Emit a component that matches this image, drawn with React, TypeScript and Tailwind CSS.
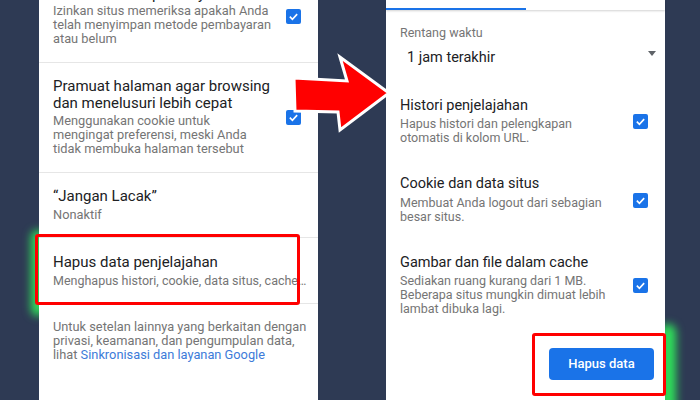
import React from 'react';

const Check: React.FC = () => (
  <div className="w-[15px] h-[15px] rounded-[2px] bg-[#1a73e8] flex items-center justify-center shrink-0">
    <svg width="11" height="11" viewBox="0 0 12 12">
      <path d="M2 6.2 L4.8 9 L10 3.4" fill="none" stroke="#fff" strokeWidth="1.8" />
    </svg>
  </div>
);

const App: React.FC = () => {
  return (
    <div
      className="relative w-[700px] h-[400px] overflow-hidden bg-[#2e3a54] flex pl-[39px] gap-[68px]"
      style={{ fontFamily: 'Roboto, "Noto Sans", sans-serif' }}
    >
      {/* green glows behind the phones */}
      <div className="absolute left-[31px] top-[230px] w-[14px] h-[86px] bg-[#2fe05a] blur-[4px] rounded-full" />
      <div className="absolute left-[660px] top-[324px] w-[16px] h-[96px] bg-[#2fe05a] blur-[4px] rounded-full" />

      {/* Left phone: privacy settings */}
      <div className="relative z-10 w-[279px] h-[400px] bg-white flex flex-col">
        <div className="-mt-[14px] pl-[14px] pr-[17px] pb-[16px] flex items-center border-b border-[#e6e6e6]">
          <div className="flex-1">
            <div className="text-[15px] leading-[17px] text-[#202124]">Akses metode pembayaran</div>
            <div className="mt-[1px] text-[12.8px] leading-[14px] text-[#757575]">
              Izinkan situs memeriksa apakah Anda<br />telah menyimpan metode pembayaran<br />atau belum
            </div>
          </div>
          <Check />
        </div>

        <div className="pt-[15px] pl-[14px] pr-[17px] pb-[16px] flex items-center border-b border-[#e6e6e6]">
          <div className="flex-1">
            <div className="text-[15px] leading-[17px] text-[#202124]">
              Pramuat halaman agar browsing<br />dan menelusuri lebih cepat
            </div>
            <div className="mt-[2px] text-[12.8px] leading-[14px] text-[#757575]">
              Menggunakan cookie untuk<br />mengingat preferensi, meski Anda<br />tidak membuka halaman tersebut
            </div>
          </div>
          <Check />
        </div>

        <div className="pt-[15px] pl-[14px] pb-[15px] border-b border-[#e6e6e6]">
          <div className="text-[15px] leading-[17px] text-[#202124]">“Jangan Lacak”</div>
          <div className="mt-[3px] text-[12.8px] leading-[14px] text-[#757575]">Nonaktif</div>
        </div>

        <div className="relative pt-[16px] pl-[14px] pb-[15px] border-b border-[#e6e6e6]">
          <div className="text-[15px] leading-[17px] text-[#202124]">Hapus data penjelajahan</div>
          <div className="mt-[3px] text-[12.5px] leading-[14px] text-[#757575] whitespace-nowrap">
            Menghapus histori, cookie, data situs, cache…
          </div>
          <div className="absolute -left-[4px] -top-[4px] w-[265px] h-[71px] border-[3px] border-[#ff0000] rounded-[3px]" />
        </div>

        <div className="pt-[16px] pl-[14px] text-[12.8px] leading-[14px] text-[#757575]">
          Untuk setelan lainnya yang berkaitan dengan<br />privasi, keamanan, dan pengumpulan data,<br />lihat{' '}
          <span className="text-[#3d7bd9]">Sinkronisasi dan layanan Google</span>
        </div>
      </div>

      {/* Right phone: clear browsing data */}
      <div className="relative z-10 w-[279px] h-[400px] bg-white flex flex-col">
        <div className="h-[10px] flex flex-col justify-end shadow-[0_1px_2px_rgba(0,0,0,0.18)]">
          <div className="h-[2px] w-1/2 bg-[#1a73e8]" />
        </div>

        <div className="pl-[14px] pr-[17px]">
          <div className="mt-[16px] text-[12.5px] leading-[14px] text-[#757575]">Rentang waktu</div>
          <div className="mt-[9px] -mr-[8px] pl-[7px] flex items-center justify-between">
            <span className="text-[14.5px] leading-[18px] text-[#202124]">1 jam terakhir</span>
            <span className="w-0 h-0 border-l-[4px] border-r-[4px] border-t-[5px] border-l-transparent border-r-transparent border-t-[#5f6368] -mt-[10px]" />
          </div>

          <div className="mt-[31px] flex items-center">
            <div className="flex-1">
              <div className="text-[14.5px] leading-[16px] text-[#202124]">Histori penjelajahan</div>
              <div className="mt-[3px] text-[12.5px] leading-[14px] text-[#757575]">
                Hapus histori dan pelengkapan<br />otomatis di kolom URL.
              </div>
            </div>
            <Check />
          </div>

          <div className="mt-[31px] flex items-center">
            <div className="flex-1">
              <div className="text-[14.5px] leading-[16px] text-[#202124]">Cookie dan data situs</div>
              <div className="mt-[4px] text-[12.5px] leading-[14px] text-[#757575]">
                Membuat Anda logout dari sebagian<br />besar situs.
              </div>
            </div>
            <Check />
          </div>

          <div className="mt-[31px] flex items-center">
            <div className="flex-1">
              <div className="text-[14.5px] leading-[16px] text-[#202124]">Gambar dan file dalam cache</div>
              <div className="mt-[3px] text-[12.5px] leading-[14px] text-[#757575]">
                Sediakan ruang kurang dari 1 MB.<br />Beberapa situs mungkin dimuat lebih<br />lambat dibuka lagi.
              </div>
            </div>
            <Check />
          </div>
        </div>

        <div className="mt-[32px] pr-[11px] flex justify-end">
          <button className="w-[105px] h-[32px] rounded-[4px] bg-[#1a73e8] text-white text-[13px] font-medium">
            Hapus data
          </button>
        </div>
      </div>

      {/* red highlight on the button */}
      <div className="absolute z-20 left-[532px] top-[333px] w-[134px] h-[63px] border-[3px] border-[#ff0000] rounded-[3px]" />

      {/* red arrow */}
      <svg className="absolute z-20 left-[285px] top-[45px]" width="115" height="100" viewBox="285 45 115 100">
        <polygon
          points="294,78 347,81 340,57 389,93 340,130 338,112 295,111"
          fill="#ff0000"
          stroke="#ffffff"
          strokeWidth="3"
          strokeLinejoin="miter"
        />
      </svg>
    </div>
  );
};

export default App;
